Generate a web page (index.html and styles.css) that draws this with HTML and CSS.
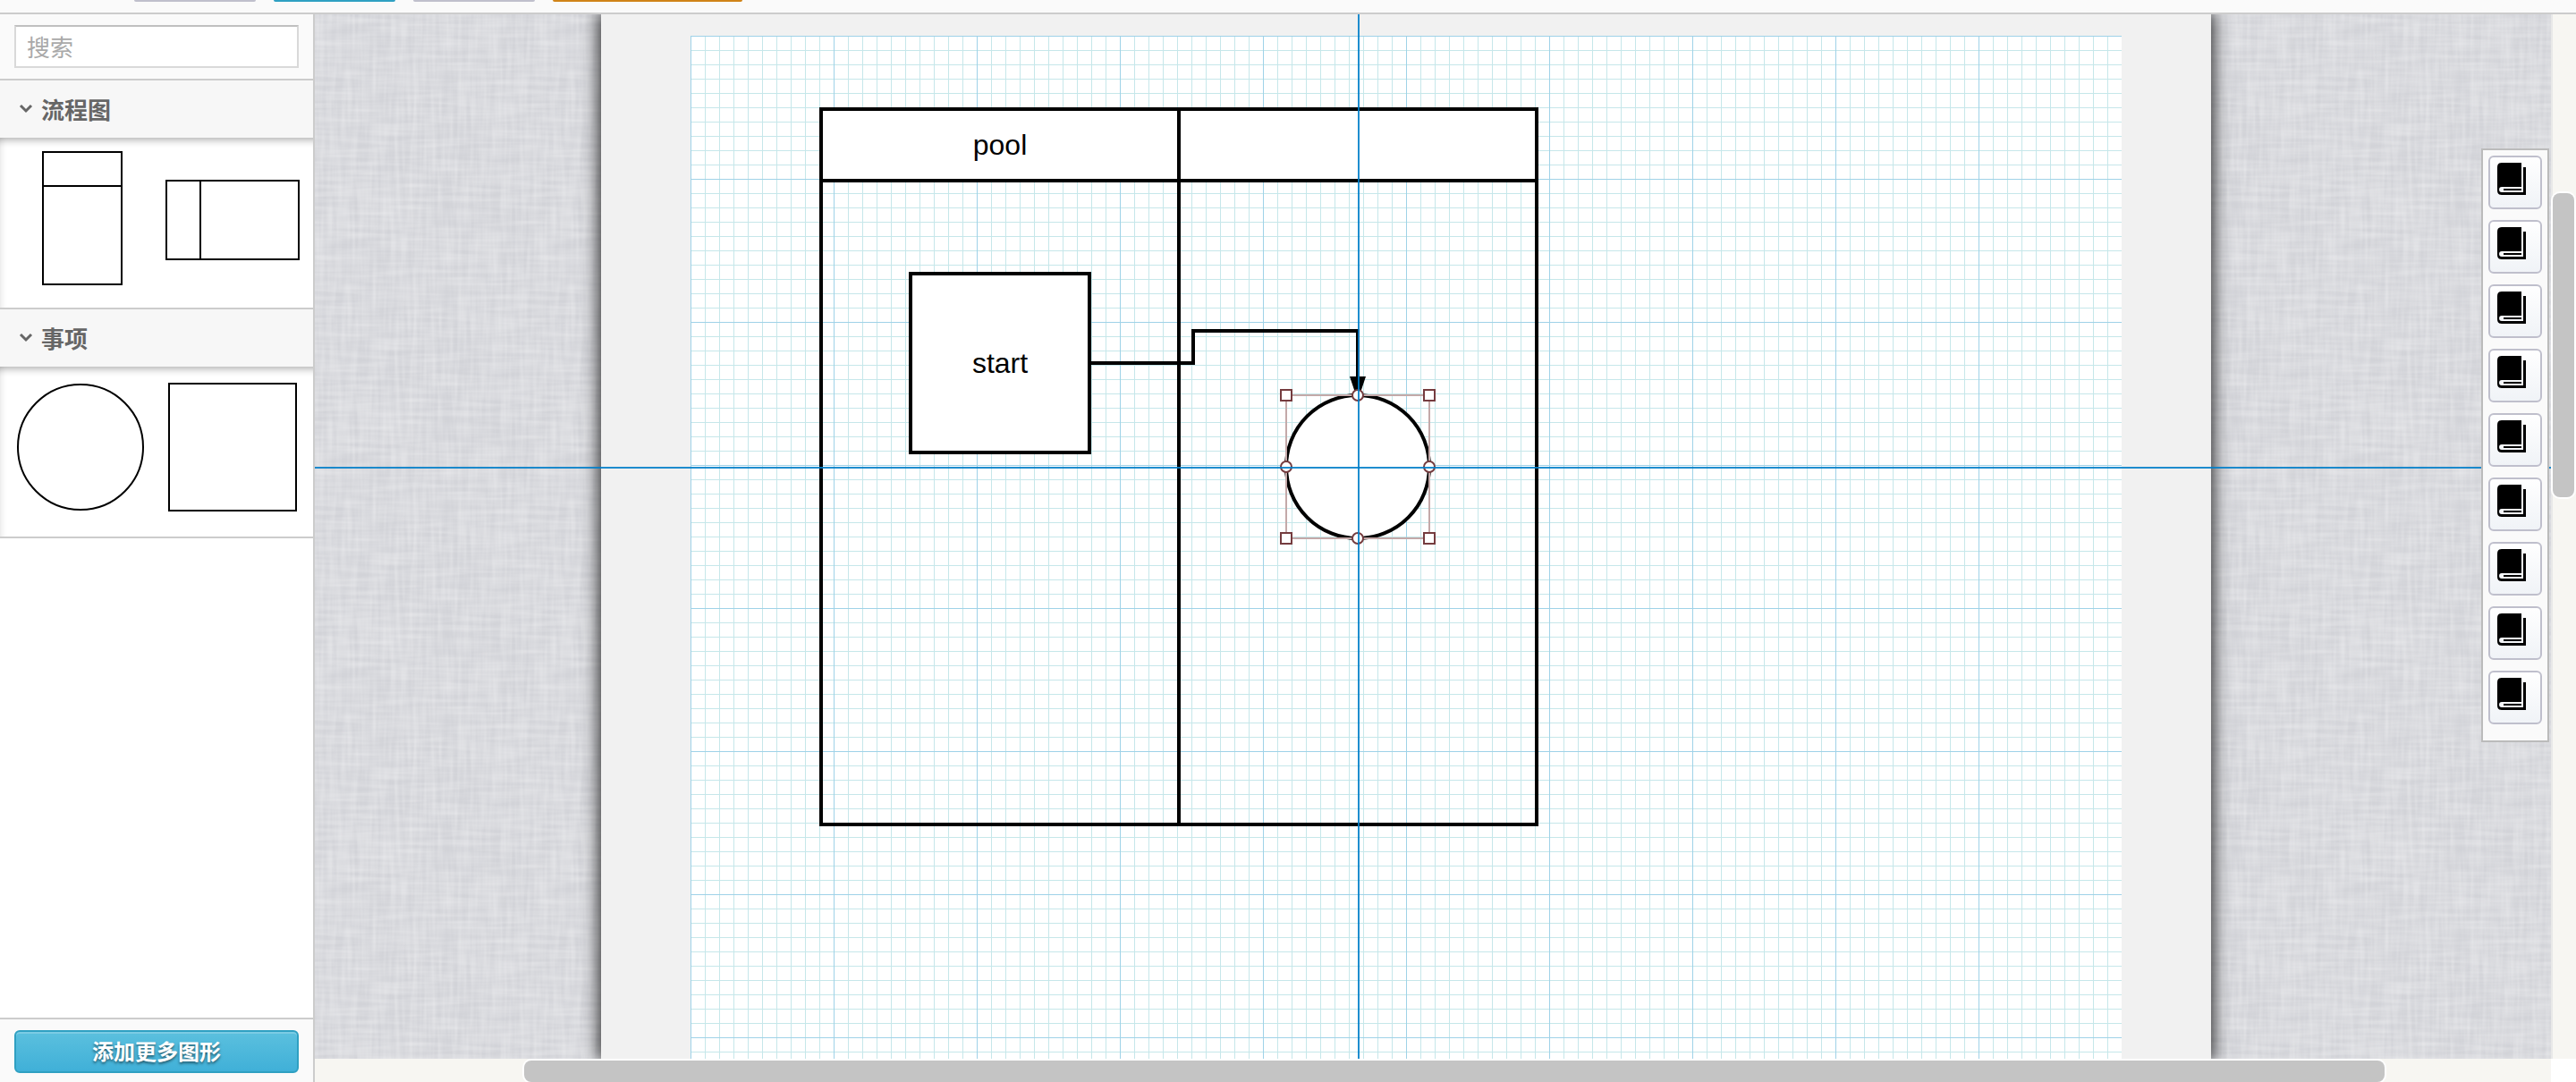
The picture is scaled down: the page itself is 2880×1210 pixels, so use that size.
FILE: index.html
```html
<!DOCTYPE html>
<html lang="zh-CN">
<head>
<meta charset="utf-8">
<meta name="viewport" content="width=device-width, initial-scale=1">
<title>流程图</title>
<link rel="stylesheet" href="styles.css">
</head>
<body class="app">
<svg class="defs" aria-hidden="true">
  <symbol id="book" viewBox="0 0 32 36">
    <path d="M5 0H27V27H5Q2 27 2 30Q2 33 5 33H29V5H32V36H5Q0 36 0 31V5Q0 0 5 0Z"/>
    <path d="M7 29H27V31H7Z"/>
  </symbol>
</svg>
<header class="toolbar">
  <div class="tool-edge"></div>
  <div class="tool-edge primary"></div>
  <div class="tool-edge"></div>
  <div class="tool-edge warning"></div>
</header>
<div class="workspace">
  <aside class="sidebar">
    <div class="search"><input type="text" class="search-box" placeholder="搜索" aria-label="搜索"></div>
    <section class="group">
      <h2 class="group-title"><svg class="chevron" viewBox="0 0 14 8"><path d="M1 1L7 7L13 1"/></svg>流程图</h2>
      <div class="group-body">
        <svg class="shape" viewBox="0 0 150 150"><path d="M34 1H122V149H34ZM34 39H122"/></svg>
        <svg class="shape" viewBox="0 0 150 150"><path d="M2 33H150V121H2Z"/><path d="M40 33V121"/></svg>
      </div>
    </section>
    <section class="group">
      <h2 class="group-title"><svg class="chevron" viewBox="0 0 14 8"><path d="M1 1L7 7L13 1"/></svg>事项</h2>
      <div class="group-body">
        <svg class="shape" viewBox="0 0 150 150"><circle cx="76" cy="75" r="70"/></svg>
        <svg class="shape" viewBox="0 0 150 150"><path d="M5 4H147V146H5Z"/></svg>
      </div>
    </section>
    <footer class="more"><button type="button" class="more-button">添加更多图形</button></footer>
  </aside>
  <main class="stage">
    <div class="viewport">
      <div class="sheet">
        <svg class="diagram" viewBox="0 0 1600 1144">
          <rect x="146" y="82" width="800" height="80" fill="#fff"/>
          <path class="line" d="M146 82H946V882H146ZM146 162H946M546 82V882"/>
          <rect class="line node" x="246" y="266" width="200" height="200"/>
          <path class="line" d="M446 366H562V330H746V386"/>
          <path d="M737 381H755L748 402H744Z"/>
          <circle class="line node" cx="746" cy="482" r="80"/>
          <rect class="selection" x="666" y="402" width="160" height="160"/>
          <g class="handle">
            <rect x="660" y="396" width="12" height="12"/><rect x="820" y="396" width="12" height="12"/>
            <rect x="660" y="556" width="12" height="12"/><rect x="820" y="556" width="12" height="12"/>
            <circle cx="746" cy="402" r="6"/><circle cx="746" cy="562" r="6"/>
            <circle cx="666" cy="482" r="6"/><circle cx="826" cy="482" r="6"/>
          </g>
          <text class="label" x="346" y="133">pool</text>
          <text class="label" x="346" y="377">start</text>
        </svg>
      </div>
      <div class="guide guide-x"></div>
      <div class="guide guide-y"></div>
      <nav class="palette" aria-label="工具">
        <button type="button" class="palette-button" aria-label="图书"><svg class="book"><use href="#book"/></svg></button>
        <button type="button" class="palette-button" aria-label="图书"><svg class="book"><use href="#book"/></svg></button>
        <button type="button" class="palette-button" aria-label="图书"><svg class="book"><use href="#book"/></svg></button>
        <button type="button" class="palette-button" aria-label="图书"><svg class="book"><use href="#book"/></svg></button>
        <button type="button" class="palette-button" aria-label="图书"><svg class="book"><use href="#book"/></svg></button>
        <button type="button" class="palette-button" aria-label="图书"><svg class="book"><use href="#book"/></svg></button>
        <button type="button" class="palette-button" aria-label="图书"><svg class="book"><use href="#book"/></svg></button>
        <button type="button" class="palette-button" aria-label="图书"><svg class="book"><use href="#book"/></svg></button>
        <button type="button" class="palette-button" aria-label="图书"><svg class="book"><use href="#book"/></svg></button>
      </nav>
    </div>
    <div class="track track-v"><div class="thumb"></div></div>
    <div class="track track-h"><div class="thumb"></div></div>
    <div class="corner"></div>
  </main>
</div>
</body>
</html>
```
FILE: styles.css
```css
* { box-sizing: border-box; }

.app {
  margin: 0;
  height: 100vh;
  display: flex;
  flex-direction: column;
  overflow: hidden;
  background: #fff;
  font-family: "Liberation Sans", "Noto Sans CJK SC", sans-serif;
}
.defs { position: absolute; width: 0; height: 0; }

.toolbar {
  flex: none;
  display: flex;
  gap: 20px;
  height: 16px;
  padding-left: 150px;
  background: #fafafa;
  border-bottom: 2px solid #ccc;
}
.tool-edge { width: 136px; height: 2px; background: #bfbfcc; border-radius: 0 0 4px 4px; }
.tool-edge.primary { background: #2fa0c2; }
.tool-edge.warning { width: 212px; background: #d08418; }

.workspace { flex: 1; min-height: 0; display: flex; }

.sidebar {
  flex: none;
  width: 352px;
  display: flex;
  flex-direction: column;
  border-right: 2px solid #ccc;
}
.search { padding: 12px 16px; background: #fafafa; border-bottom: 2px solid #ccc; }
.search-box {
  display: block;
  width: 100%;
  height: 48px;
  padding: 0 12px 2px;
  border: 2px solid #d9d9d9;
  border-top-color: #c0c0c0;
  border-radius: 0;
  background: #fff;
  font: 26px "Noto Sans CJK SC", sans-serif;
}
.search-box::placeholder { color: #a9a9a9; opacity: 1; }

.group { border-bottom: 2px solid #ccc; }
.group-title {
  display: flex;
  align-items: center;
  gap: 10px;
  height: 64px;
  margin: 0;
  padding: 0 22px 2px;
  background: #f7f7f7;
  color: #666;
  font: bold 26px "Noto Sans CJK SC", sans-serif;
}
.chevron { width: 14px; height: 8px; overflow: visible; fill: none; stroke: #666; stroke-width: 3; }
.group-body {
  display: flex;
  justify-content: space-between;
  height: 190px;
  padding: 15px 16px 0 14px;
  box-shadow: inset 0 12px 10px -10px rgba(0, 0, 0, .35), inset 8px 0 8px -8px rgba(0, 0, 0, .15);
}
.shape { width: 150px; height: 150px; overflow: visible; fill: #fff; stroke: #000; stroke-width: 2; }

.more { margin-top: auto; padding: 12px 16px 10px; background: #fafafa; border-top: 2px solid #ccc; }
.more-button {
  display: block;
  width: 100%;
  height: 48px;
  padding: 0 0 2px;
  border: 2px solid #2fa0c2;
  border-radius: 6px;
  background: linear-gradient(#5bc0de, #40b0d8);
  box-shadow: inset 0 2px 0 rgba(255, 255, 255, .2);
  color: #fff;
  font: bold 24px/38px "Noto Sans CJK SC", sans-serif;
  text-shadow: 0 2px 3px rgba(0, 0, 0, .5);
}

.stage {
  flex: 1;
  min-width: 0;
  display: grid;
  grid-template: 1fr 26px / 1fr 28px;
}
.viewport {
  position: relative;
  display: flex;
  justify-content: center;
  overflow: hidden;
  padding-right: 60px;
  background: #d2d3d8 url("data:image/svg+xml,%3Csvg xmlns='http://www.w3.org/2000/svg' width='250' height='240'%3E%3Cfilter id='h' x='0' y='0' width='1' height='1'%3E%3CfeTurbulence type='fractalNoise' baseFrequency='.016 .2' numOctaves='2' seed='3' stitchTiles='stitch'/%3E%3CfeColorMatrix values='0 0 0 0 1 0 0 0 0 1 0 0 0 0 1 .5 0 0 0 -.16'/%3E%3C/filter%3E%3Cfilter id='v' x='0' y='0' width='1' height='1'%3E%3CfeTurbulence type='fractalNoise' baseFrequency='.2 .016' numOctaves='2' seed='8' stitchTiles='stitch'/%3E%3CfeColorMatrix values='0 0 0 0 1 0 0 0 0 1 0 0 0 0 1 .5 0 0 0 -.16'/%3E%3C/filter%3E%3Crect width='250' height='240' filter='url(%23h)'/%3E%3Crect width='250' height='240' filter='url(%23v)'/%3E%3C/svg%3E");
}
.sheet {
  flex: none;
  width: 1800px;
  padding: 24px 100px 0;
  background: #f1f1f1;
  box-shadow: 0 0 18px 2px rgba(0, 0, 0, .85);
}
.diagram {
  display: block;
  width: 1600px;
  height: 1144px;
  background-color: #fff;
  background-image:
    linear-gradient(90deg, #9fd2e8 1px, transparent 1px),
    linear-gradient(#9fd2e8 1px, transparent 1px),
    linear-gradient(90deg, #c6e7ea 1px, transparent 1px),
    linear-gradient(#c6e7ea 1px, transparent 1px);
  background-size: 160px 160px, 160px 160px, 16px 16px, 16px 16px;
}
.line { fill: none; stroke: #000; stroke-width: 4; }
.node { fill: #fff; }
.selection { fill: none; stroke: #c4a9a9; stroke-width: 2; }
.handle { fill: #fff; stroke: #753c3f; stroke-width: 2; }
.label { font-size: 32px; text-anchor: middle; }

.guide { position: absolute; background: rgba(0, 125, 200, .88); }
.guide-x { left: 0; right: 0; top: 506px; height: 2px; }
.guide-y { left: 1166px; top: 0; bottom: 0; width: 2px; }

.palette {
  position: absolute;
  top: 150px;
  right: 2px;
  display: flex;
  flex-direction: column;
  gap: 12px;
  padding: 6px 6px 18px;
  background: #fafafa;
  border: 2px solid #bbb;
}
.palette-button {
  width: 60px;
  height: 60px;
  padding: 0 8px 8px;
  border: 2px solid #bfbfcc;
  border-radius: 6px;
  background: linear-gradient(#fff, #f0f3f7);
}
.book { display: block; width: 32px; height: 36px; }

.track { background: #f7f6f2; }
.track-v { border-left: 2px solid #e8e8e8; padding: 200px 2px 0 0; }
.track-v .thumb { height: 340px; }
.track-h { padding: 2px 186px 0 234px; }
.track-h .thumb { height: 24px; }
.thumb { background: #c4c4c4; border-radius: 8px; box-shadow: 0 0 0 2px #fff; }
.corner { background: #fff; }
```
